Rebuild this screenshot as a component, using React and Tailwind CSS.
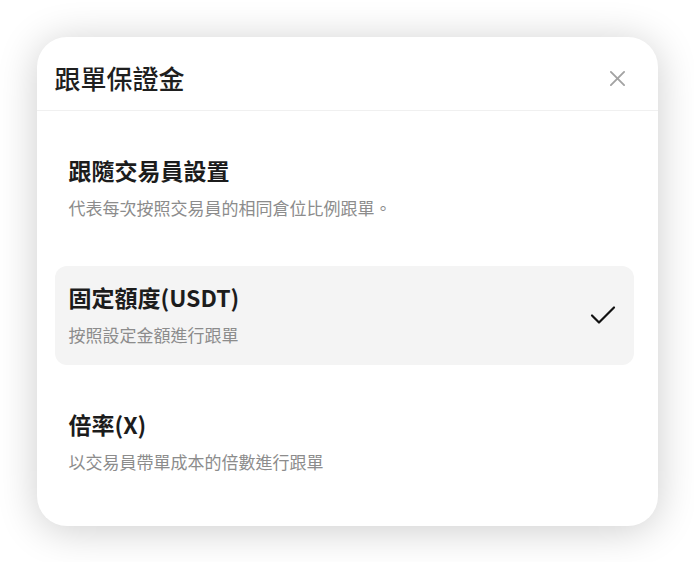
import React, { useState } from 'react';

const options = [
  { id: 'follow', title: '跟隨交易員設置', desc: '代表每次按照交易員的相同倉位比例跟單。' },
  { id: 'fixed', title: '固定額度(USDT)', desc: '按照設定金額進行跟單' },
  { id: 'ratio', title: '倍率(X)', desc: '以交易員帶單成本的倍數進行跟單' },
];

const CloseIcon = () => (
  <svg width="17" height="17" viewBox="0 0 18 18" fill="none" stroke="#a3a3a3" strokeWidth="2" strokeLinecap="round">
    <path d="M2 2L16 16M16 2L2 16" />
  </svg>
);

const CheckIcon = () => (
  <svg width="26" height="20" viewBox="0 0 26 20" fill="none" stroke="#111" strokeWidth="2.2" strokeLinecap="round" strokeLinejoin="round">
    <path d="M2 10.5L9 17.5L24 2.5" />
  </svg>
);

export default function App() {
  const [selected, setSelected] = useState('fixed');

  return (
    <div
      className="w-[694px] h-[562px] bg-white flex items-center justify-center"
      style={{ fontFamily: '"Noto Sans CJK TC", "Noto Sans", sans-serif' }}
    >
      <div className="w-[621px] h-[489px] bg-white rounded-[30px] shadow-[0_4px_40px_rgba(0,0,0,0.2)] flex flex-col overflow-hidden">
        {/* Header */}
        <div className="h-[74px] shrink-0 flex items-center justify-between pt-[10px] pl-[18px] pr-[32px] border-b border-[#f0f0f0]">
          <h2 className="text-[26px] font-medium text-[#1f1f1f] leading-none">跟單保證金</h2>
          <button className="p-0">
            <CloseIcon />
          </button>
        </div>

        {/* Options */}
        <div className="flex flex-col gap-[28px] pl-[18px] pr-[24px] pt-[28px] pb-[34px]">
          {options.map((o) => (
            <button
              key={o.id}
              onClick={() => setSelected(o.id)}
              className={`h-[99px] rounded-[12px] flex items-center justify-between pl-[14px] pr-[18px] text-left ${
                selected === o.id ? 'bg-[#f4f4f4]' : 'bg-white'
              }`}
            >
              <div className="flex flex-col">
                <span className="text-[23px] leading-[28px] font-semibold text-[#1c1c1c]">{o.title}</span>
                <span className="mt-[12px] text-[17px] leading-[24px] text-[#8c8c8c]">{o.desc}</span>
              </div>
              {selected === o.id && <CheckIcon />}
            </button>
          ))}
        </div>
      </div>
    </div>
  );
}
